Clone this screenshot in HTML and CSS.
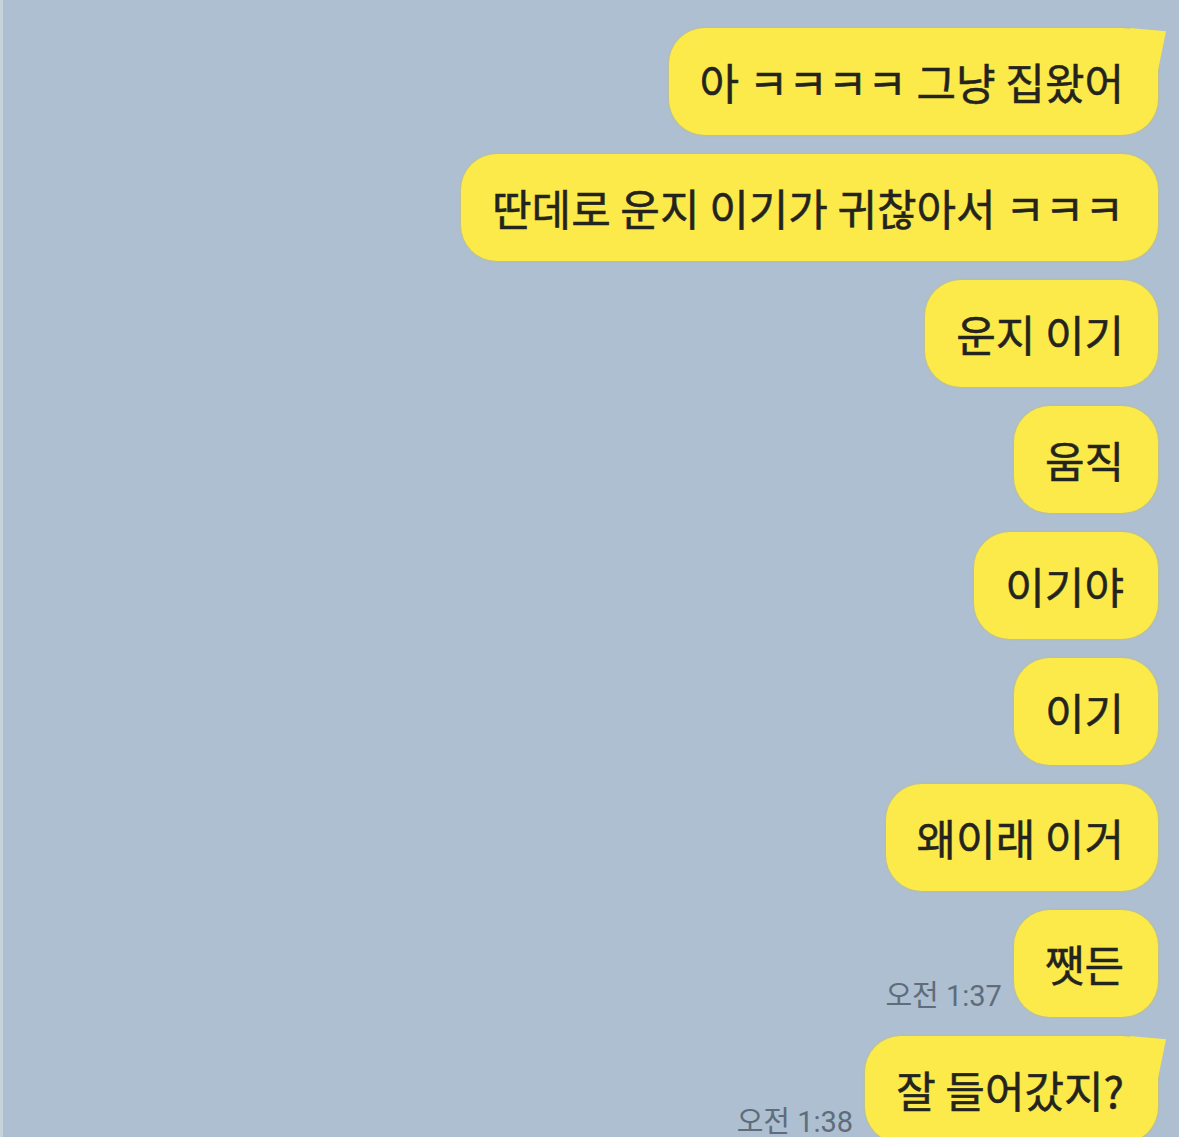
FILE: index.html
```html
<!DOCTYPE html>
<html>
<head>
	<meta charset="utf-8">
	<title>채팅</title>
	<link rel="stylesheet" href="styles.css">
</head>
<body>
	<div class="chat">
		<div class="row"><div class="bubble first">아 ㅋㅋㅋㅋ 그냥 집왔어</div></div>
		<div class="row"><div class="bubble">딴데로 운지 이기가 귀찮아서 ㅋㅋㅋ</div></div>
		<div class="row"><div class="bubble">운지 이기</div></div>
		<div class="row"><div class="bubble">움직</div></div>
		<div class="row"><div class="bubble">이기야</div></div>
		<div class="row"><div class="bubble">이기</div></div>
		<div class="row"><div class="bubble">왜이래 이거</div></div>
		<div class="row">
			<span class="time">오전 1:37</span>
			<div class="bubble">쨋든</div>
		</div>
		<div class="row">
			<span class="time">오전 1:38</span>
			<div class="bubble first">잘 들어갔지?</div>
		</div>
	</div>
</body>
</html>
```

FILE: styles.css
```css
html, body {
	overflow: hidden;
}
body {
	margin: 0;
	background-color: #adbfd0;
	border-left: 3px solid #c6d3d9;
	font-family: "Noto Sans CJK KR", "Noto Sans", sans-serif;
	min-height: 1137px;
}
.chat {
	display: flex;
	flex-direction: column;
	gap: 19px;
	padding: 28px 21px 0 0;
}
.row {
	display: flex;
	justify-content: flex-end;
	align-items: flex-end;
	gap: 12px;
}
.bubble {
	position: relative;
	background-color: #fce94a;
	color: #24241e;
	font-size: 43px;
	line-height: 47px;
	-webkit-text-stroke: 0.5px #24241e;
	padding: 30px 34px 30px 31px;
	border-radius: 36px;
	box-shadow: 0 0 1px 1px rgba(205, 196, 90, 0.55);
	white-space: nowrap;
}
.bubble.first::after {
	content: "";
	position: absolute;
	top: 0;
	right: -8px;
	width: 36px;
	height: 42px;
	background-color: #fce94a;
	clip-path: polygon(0 0, 100% 8%, 78% 100%, 0 100%);
}
.time {
	color: #5f6c7b;
	font-family: Roboto, "Noto Sans CJK KR", sans-serif;
	font-size: 29px;
	line-height: 1;
	margin-bottom: 6px;
}
```
